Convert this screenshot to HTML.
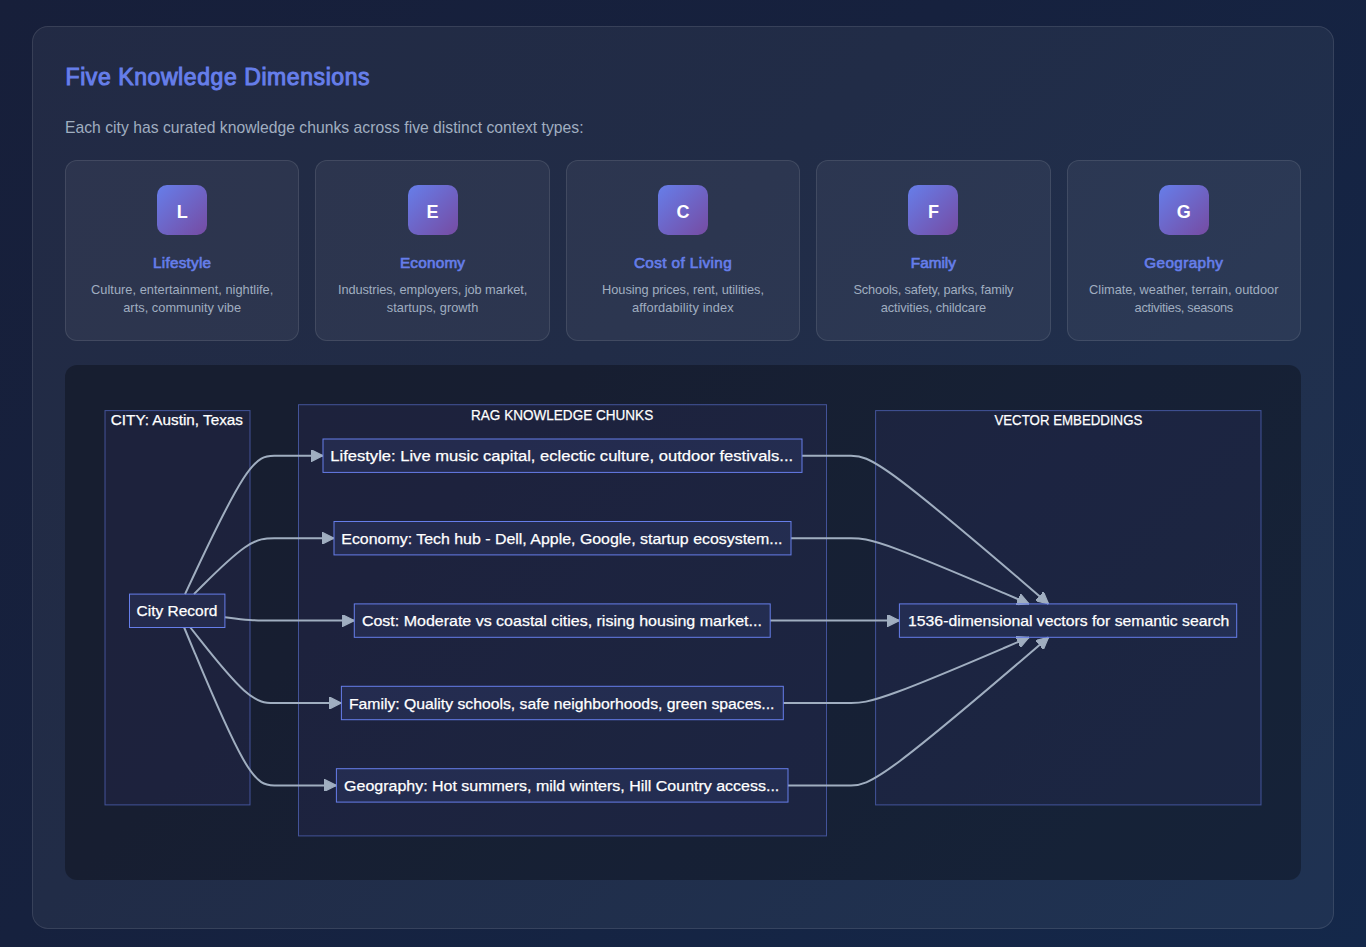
<!DOCTYPE html>
<html lang="en">
<head>
<meta charset="utf-8">
<title>Five Knowledge Dimensions</title>
<style>
*{box-sizing:border-box;margin:0;padding:0}
html,body{width:1366px;height:947px;overflow:hidden}
body{font-family:"Liberation Sans",sans-serif;background:linear-gradient(135deg,#171f3a 0%,#16213e 41%,#14284a 100%);position:relative;color:#a0aec0}
.card{position:absolute;left:32px;top:26px;width:1302px;height:903px;border:1px solid rgba(255,255,255,0.1);border-radius:16px;background:rgba(255,255,255,0.05)}
h2{position:absolute;left:65.5px;top:60.5px;letter-spacing:0.58px;font-size:23px;line-height:32px;font-weight:normal;-webkit-text-stroke:1px #667eea;color:#667eea;white-space:nowrap}
.lead{position:absolute;left:65px;top:117.8px;letter-spacing:0.02px;font-size:15.7px;line-height:20px;color:#a0aec0;white-space:nowrap}
.dim{position:absolute;top:160px;width:234.4px;height:180.5px;border:1px solid rgba(255,255,255,0.1);border-radius:12px;background:rgba(255,255,255,0.05);text-align:center}
.d1{left:65px}.d2{left:315.4px}.d3{left:565.8px}.d4{left:816.2px}.d5{left:1066.6px}
.ic{position:absolute;left:91.2px;top:24px;width:50px;height:50px;border-radius:10px;background:linear-gradient(135deg,#667eea 0%,#764ba2 100%);color:#fff;font-weight:bold;font-size:18px;line-height:54px;text-align:center}
.dim h3{position:absolute;left:0;right:0;top:91.5px;font-size:15.3px;line-height:20px;font-weight:normal;-webkit-text-stroke:0.65px #667eea;color:#667eea;white-space:nowrap}
.dim p{position:absolute;left:0;right:0;top:120.4px;font-size:12.8px;line-height:18px;color:#a0aec0;white-space:nowrap}
.diagram{position:absolute;left:65px;top:365px;width:1236px;height:515px;border-radius:12px;background:rgba(0,0,0,0.3)}
svg.dg{position:absolute;left:0;top:0}
.cl rect{fill:rgba(110,100,220,0.075);stroke:rgba(102,126,234,0.55);stroke-width:1}
.nd rect{fill:rgba(102,126,234,0.1);stroke:#667eea;stroke-width:1}
.ed path{fill:none;stroke:#a0aec0;stroke-width:2}
.tx text{font-family:"Liberation Sans",sans-serif;font-size:15.5px;fill:#fff;stroke:#fff;stroke-width:0.25px}
</style>
</head>
<body>
<div class="card"></div>
<h2>Five Knowledge Dimensions</h2>
<p class="lead">Each city has curated knowledge chunks across five distinct context types:</p>
<div class="dim d1"><div class="ic">L</div><h3 style="letter-spacing:0.241px">Lifestyle</h3><p><span class="l1" style="letter-spacing:0.026px">Culture, entertainment, nightlife,</span><br><span class="l2" style="letter-spacing:0.030px">arts, community vibe</span></p></div>
<div class="dim d2"><div class="ic">E</div><h3 style="letter-spacing:0.217px">Economy</h3><p><span class="l1" style="letter-spacing:-0.082px">Industries, employers, job market,</span><br><span class="l2" style="letter-spacing:0.031px">startups, growth</span></p></div>
<div class="dim d3"><div class="ic">C</div><h3 style="letter-spacing:0.396px">Cost of Living</h3><p><span class="l1" style="letter-spacing:-0.056px">Housing prices, rent, utilities,</span><br><span class="l2" style="letter-spacing:0.126px">affordability index</span></p></div>
<div class="dim d4"><div class="ic">F</div><h3 style="letter-spacing:0.010px">Family</h3><p><span class="l1" style="letter-spacing:-0.163px">Schools, safety, parks, family</span><br><span class="l2" style="letter-spacing:-0.095px">activities, childcare</span></p></div>
<div class="dim d5"><div class="ic">G</div><h3 style="letter-spacing:0.363px">Geography</h3><p><span class="l1" style="letter-spacing:0.006px">Climate, weather, terrain, outdoor</span><br><span class="l2" style="letter-spacing:-0.289px">activities, seasons</span></p></div>
<div class="diagram"></div>
<svg class="dg" width="1366" height="947" viewBox="0 0 1366 947">
<defs><marker id="ah" viewBox="0 0 10 10" refX="10" refY="5" markerUnits="userSpaceOnUse" markerWidth="12" markerHeight="12" orient="auto"><path d="M 0 0 L 10 5 L 0 10 z" fill="#a0aec0" stroke="#a0aec0" stroke-width="1"/></marker></defs>
<g class="cl">
<rect x="105" y="410.6" width="145" height="394.3"/>
<rect x="298.5" y="404.7" width="528" height="431.2"/>
<rect x="875.6" y="410.6" width="385.4" height="394.3"/>
</g>
<g class="ed">
<path d="M185.04,594.10L195.87,571.03C206.69,547.97,228.35,501.83,243.21,478.77C258.08,455.70,266.17,455.70,274.25,455.70C282.33,455.70,290.42,455.70,298.54,455.70C306.67,455.70,314.83,455.70,318.92,455.70L323.00,455.70" marker-end="url(#ah)"/>
<path d="M193.95,594.10L203.29,584.78C212.63,575.47,231.32,556.83,244.70,547.52C258.08,538.20,266.17,538.20,274.25,538.20C282.33,538.20,290.42,538.20,300.38,538.20C310.33,538.20,322.17,538.20,328.08,538.20L334.00,538.20" marker-end="url(#ah)"/>
<path d="M224.90,617.22L229.08,617.78C233.27,618.35,241.63,619.47,249.86,620.04C258.08,620.60,266.17,620.60,274.25,620.60C282.33,620.60,290.42,620.60,303.76,620.60C317.10,620.60,335.70,620.60,345.00,620.60L354.30,620.60" marker-end="url(#ah)"/>
<path d="M190.39,627.50L200.32,640.08C210.26,652.67,230.13,677.83,244.11,690.42C258.08,703.00,266.17,703.00,274.25,703.00C282.33,703.00,290.42,703.00,301.61,703.00C312.80,703.00,327.10,703.00,334.25,703.00L341.40,703.00" marker-end="url(#ah)"/>
<path d="M184.16,627.50L195.14,653.82C206.11,680.13,228.05,732.77,243.07,759.08C258.08,785.40,266.17,785.40,274.25,785.40C282.33,785.40,290.42,785.40,300.78,785.40C311.13,785.40,323.77,785.40,330.08,785.40L336.40,785.40" marker-end="url(#ah)"/>
<path d="M802.00,455.70L806.08,455.70C810.17,455.70,818.33,455.70,826.50,455.70C834.67,455.70,842.83,455.70,851.00,455.70C859.17,455.70,867.33,455.70,900.26,480.40C933.18,505.10,990.87,554.50,1019.71,579.20L1048.55,603.90" marker-end="url(#ah)"/>
<path d="M791.00,538.20L796.92,538.20C802.83,538.20,814.67,538.20,824.67,538.20C834.67,538.20,842.83,538.20,851.00,538.20C859.17,538.20,867.33,538.20,897.00,549.15C926.68,560.10,977.85,582.00,1003.44,592.95L1029.03,603.90" marker-end="url(#ah)"/>
<path d="M770.20,620.60L779.58,620.60C788.97,620.60,807.73,620.60,821.20,620.60C834.67,620.60,842.83,620.60,851.00,620.60C859.17,620.60,867.33,620.60,875.40,620.60C883.47,620.60,891.43,620.60,895.42,620.60L899.40,620.60" marker-end="url(#ah)"/>
<path d="M783.30,703.00L790.50,703.00C797.70,703.00,812.10,703.00,823.38,703.00C834.67,703.00,842.83,703.00,851.00,703.00C859.17,703.00,867.33,703.00,897.00,692.05C926.68,681.10,977.85,659.20,1003.44,648.25L1029.03,637.30" marker-end="url(#ah)"/>
<path d="M788.00,785.40L794.42,785.40C800.83,785.40,813.67,785.40,824.17,785.40C834.67,785.40,842.83,785.40,851.00,785.40C859.17,785.40,867.33,785.40,900.26,760.72C933.18,736.03,990.86,686.67,1019.70,661.98L1048.54,637.30" marker-end="url(#ah)"/>
</g>
<g class="nd">
<rect x="129.5" y="594.10" width="95.4" height="33.4"/>
<rect x="323.0" y="439.00" width="479.0" height="33.4"/>
<rect x="334.0" y="521.50" width="457.0" height="33.4"/>
<rect x="354.3" y="603.90" width="415.9" height="33.4"/>
<rect x="341.4" y="686.30" width="441.9" height="33.4"/>
<rect x="336.4" y="768.70" width="451.6" height="33.4"/>
<rect x="899.4" y="603.90" width="337.3" height="33.4"/>
</g>
<g class="tx">
<text class="t" x="110.8" y="425" textLength="132.1" lengthAdjust="spacingAndGlyphs">CITY: Austin, Texas</text>
<text class="t" x="471.0" y="420" textLength="182.2" lengthAdjust="spacingAndGlyphs">RAG KNOWLEDGE CHUNKS</text>
<text class="t" x="994.4" y="425" textLength="148.0" lengthAdjust="spacingAndGlyphs">VECTOR EMBEDDINGS</text>
<text class="t" x="136.5" y="616" textLength="81.0" lengthAdjust="spacingAndGlyphs">City Record</text>
<text class="t" x="330.3" y="461" textLength="462.8" lengthAdjust="spacingAndGlyphs">Lifestyle: Live music capital, eclectic culture, outdoor festivals...</text>
<text class="t" x="341.3" y="544" textLength="441.2" lengthAdjust="spacingAndGlyphs">Economy: Tech hub - Dell, Apple, Google, startup ecosystem...</text>
<text class="t" x="361.9" y="626" textLength="400.0" lengthAdjust="spacingAndGlyphs">Cost: Moderate vs coastal cities, rising housing market...</text>
<text class="t" x="348.9" y="709" textLength="425.6" lengthAdjust="spacingAndGlyphs">Family: Quality schools, safe neighborhoods, green spaces...</text>
<text class="t" x="344.1" y="791" textLength="435.2" lengthAdjust="spacingAndGlyphs">Geography: Hot summers, mild winters, Hill Country access...</text>
<text class="t" x="908.1" y="626" textLength="321.3" lengthAdjust="spacingAndGlyphs">1536-dimensional vectors for semantic search</text>
</g>
</svg>
</body>
</html>
